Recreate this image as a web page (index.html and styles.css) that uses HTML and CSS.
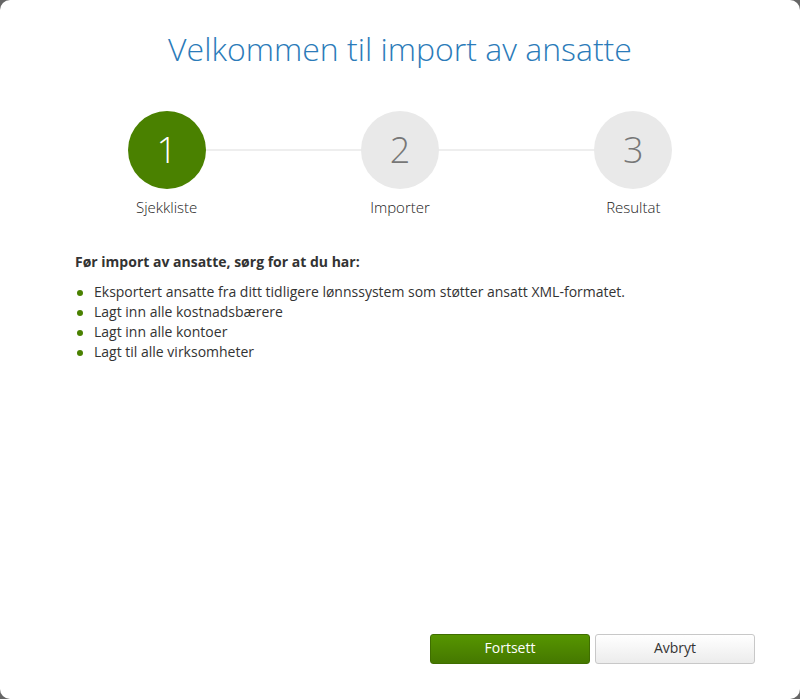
FILE: index.html
```html
<!DOCTYPE html>
<html lang="no">

<head>
    <meta charset="UTF-8">
    <meta name="viewport" content="width=device-width, initial-scale=1.0">
    <title>Import av ansatte</title>
    <link rel="stylesheet" href="styles.css">
</head>

<body>

    <!-- Import dialog -->
    <div class="dialog">
        <h1>Velkommen til import av ansatte</h1>

        <!-- Wizard steps -->
        <div class="steps">
            <div class="step active">
                <div class="step-circle">1</div>
                <div class="step-label">Sjekkliste</div>
            </div>
            <div class="step">
                <div class="step-circle">2</div>
                <div class="step-label">Importer</div>
            </div>
            <div class="step">
                <div class="step-circle">3</div>
                <div class="step-label">Resultat</div>
            </div>
        </div>

        <!-- Checklist -->
        <div class="content">
            <p class="intro">Før import av ansatte, sørg for at du har:</p>
            <ul class="checklist">
                <li>Eksportert ansatte fra ditt tidligere lønnssystem som støtter ansatt XML-formatet.</li>
                <li>Lagt inn alle kostnadsbærere</li>
                <li>Lagt inn alle kontoer</li>
                <li>Lagt til alle virksomheter</li>
            </ul>
        </div>

        <!-- Buttons -->
        <div class="button-container">
            <button class="btn btn-primary">Fortsett</button>
            <button class="btn btn-default">Avbryt</button>
        </div>
    </div>

</body>

</html>
```

FILE: styles.css
```css
body {
    font-family: 'Open Sans', sans-serif;
    background-color: #666;
    color: #333;
    margin: 0;
    padding: 0;
}

/* Dialog box */
.dialog {
    width: 800px;
    height: 699px;
    background-color: white;
    border-radius: 10px;
    display: flex;
    flex-direction: column;
    box-sizing: border-box;
}

h1 {
    font-size: 32px;
    font-weight: 300;
    color: #2b7bb9;
    text-align: center;
    margin: 26px 0 0 0;
    line-height: 46px;
}

/* Steps */
.steps {
    display: flex;
    margin: 39px 50px 0 50px;
    position: relative;
}

.steps::before {
    content: "";
    position: absolute;
    top: 38px;
    left: 117px;
    right: 117px;
    height: 2px;
    background-color: #eee;
}

.step {
    flex: 1;
    display: flex;
    flex-direction: column;
    align-items: center;
    position: relative;
}

.step-circle {
    width: 78px;
    height: 78px;
    border-radius: 50%;
    background-color: #e9e9e9;
    color: #777;
    font-size: 36px;
    font-weight: 300;
    line-height: 78px;
    text-align: center;
}

.step.active .step-circle {
    background-color: #4a8100;
    color: white;
}

.step-label {
    font-size: 15px;
    font-weight: 300;
    color: #222;
    margin-top: 7px;
    line-height: 22px;
}

/* Checklist */
.content {
    flex: 1;
    padding: 0 75px;
    margin-top: 34px;
    font-size: 14px;
}

.intro {
    font-weight: bold;
    margin: 0 0 10px 0;
    line-height: 20px;
}

.checklist {
    list-style: none;
    margin: 0;
    padding: 0;
}

.checklist li {
    position: relative;
    padding-left: 19px;
    line-height: 20px;
}

.checklist li::before {
    content: "";
    position: absolute;
    left: 2px;
    top: 8px;
    width: 6px;
    height: 6px;
    border-radius: 50%;
    background-color: #4a8100;
}

/* Buttons */
.button-container {
    display: flex;
    justify-content: flex-end;
    gap: 5px;
    padding: 0 45px 35px 0;
}

.btn {
    font-family: 'Open Sans', sans-serif;
    font-size: 14px;
    width: 160px;
    height: 30px;
    padding: 0 0 3px 0;
    border-radius: 3px;
    cursor: pointer;
}

.btn-primary {
    background: linear-gradient(#569500, #457800);
    border: 1px solid #3f6e00;
    color: white;
}

.btn-default {
    background: linear-gradient(#fff, #ececec);
    border: 1px solid #c8c8c8;
    color: #333;
}
```
